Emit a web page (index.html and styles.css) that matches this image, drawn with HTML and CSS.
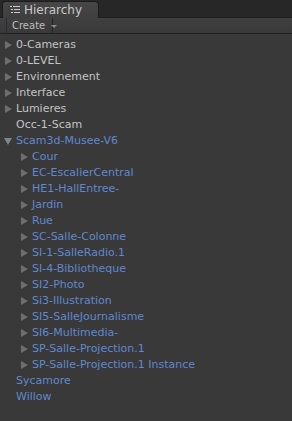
FILE: index.html
```html
<!doctype html>
<html>
    <head>
        <title>Hierarchy</title>
        <link rel="stylesheet" href="styles.css">
    </head>
    <body>
        <div class="panel">
            <div class="tabbar">
                <div class="tab">
                    <svg class="tab-icon" width="10" height="9" viewBox="0 0 10 9">
                        <rect x="0" y="0" width="2" height="1" fill="#c8c8c8" />
                        <rect x="3" y="0" width="7" height="1" fill="#c8c8c8" />
                        <rect x="1" y="3" width="2" height="1" fill="#c8c8c8" />
                        <rect x="4" y="3" width="6" height="1" fill="#c8c8c8" />
                        <rect x="1" y="6" width="2" height="1" fill="#c8c8c8" />
                        <rect x="4" y="6" width="6" height="1" fill="#c8c8c8" />
                    </svg>
                    <span>Hierarchy</span>
                </div>
            </div>

            <div class="toolbar">
                <div class="create">Create <span class="caret"></span></div>
            </div>

            <ul class="tree">
                <li class="row closed">0-Cameras</li>
                <li class="row closed">0-LEVEL</li>
                <li class="row closed">Environnement</li>
                <li class="row closed">Interface</li>
                <li class="row closed">Lumieres</li>
                <li class="row">Occ-1-Scam</li>
                <li class="row open prefab">Scam3d-Musee-V6</li>
                <li class="row child closed prefab">Cour</li>
                <li class="row child closed prefab">EC-EscalierCentral</li>
                <li class="row child closed prefab">HE1-HallEntree-</li>
                <li class="row child closed prefab">Jardin</li>
                <li class="row child closed prefab">Rue</li>
                <li class="row child closed prefab">SC-Salle-Colonne</li>
                <li class="row child closed prefab">SI-1-SalleRadio.1</li>
                <li class="row child closed prefab">SI-4-Bibliotheque</li>
                <li class="row child closed prefab">SI2-Photo</li>
                <li class="row child closed prefab">Si3-Illustration</li>
                <li class="row child closed prefab">SI5-SalleJournalisme</li>
                <li class="row child closed prefab">SI6-Multimedia-</li>
                <li class="row child closed prefab">SP-Salle-Projection.1</li>
                <li class="row child closed prefab">SP-Salle-Projection.1 Instance</li>
                <li class="row prefab">Sycamore</li>
                <li class="row prefab">Willow</li>
            </ul>
        </div>
    </body>
</html>
```

FILE: styles.css
```css
* {
    box-sizing: border-box;
}

html,
body {
    margin: 0;
    padding: 0;
    background: #393939;
}

.panel {
    width: 292px;
    height: 421px;
    overflow: hidden;
    font-family: "DejaVu Sans", Verdana, sans-serif;
    font-size: 11px;
    color: #c4c4c4;
    background: #393939;
}

.tabbar {
    height: 18px;
    padding: 1px 0 0 2px;
    background: #272727;
    border-bottom: 1px solid #1f1f1f;
    display: flex;
}

.tab {
    width: 97px;
    height: 17px;
    margin-bottom: -1px;
    border: 1px solid #1c1c1c;
    border-bottom: none;
    border-radius: 3px 4px 0 0;
    background: linear-gradient(#474747, #3e3e3e);
    display: flex;
    align-items: center;
    gap: 4px;
    padding-left: 7px;
    font-size: 12px;
    color: #c8c8c8;

    .tab-icon {
        margin-top: 1px;
    }
}

.toolbar {
    height: 16px;
    background: linear-gradient(#404040, #393939);
    border-bottom: 1px solid #202020;
    padding-left: 6px;
    display: flex;
}

.create {
    width: 47px;
    height: 100%;
    border-left: 1px solid #2c2c2c;
    border-right: 1px solid #252525;
    display: flex;
    align-items: center;
    padding-left: 5px;
    font-size: 10px;
    color: #bdbdbd;

    .caret {
        margin-left: 6px;
        border-left: 3px solid transparent;
        border-right: 3px solid transparent;
        border-top: 3px solid #8a8a8a;
        margin-top: 1px;
    }
}

.tree {
    list-style: none;
    margin: 0;
    padding: 3px 0 0 0;

    .row {
        height: 16px;
        line-height: 16px;
        padding-left: 16px;
        position: relative;
        white-space: nowrap;

        &.child {
            padding-left: 32px;
        }

        &.prefab {
            color: #6088cf;
        }

        &.closed::before {
            content: "";
            position: absolute;
            top: 4px;
            left: 5px;
            border-top: 4px solid transparent;
            border-bottom: 4px solid transparent;
            border-left: 7px solid #6e6e6e;
        }

        &.child.closed::before {
            left: 21px;
        }

        &.open::before {
            content: "";
            position: absolute;
            top: 5px;
            left: 4px;
            border-left: 4px solid transparent;
            border-right: 4px solid transparent;
            border-top: 7px solid #7b8594;
        }
    }
}
```
